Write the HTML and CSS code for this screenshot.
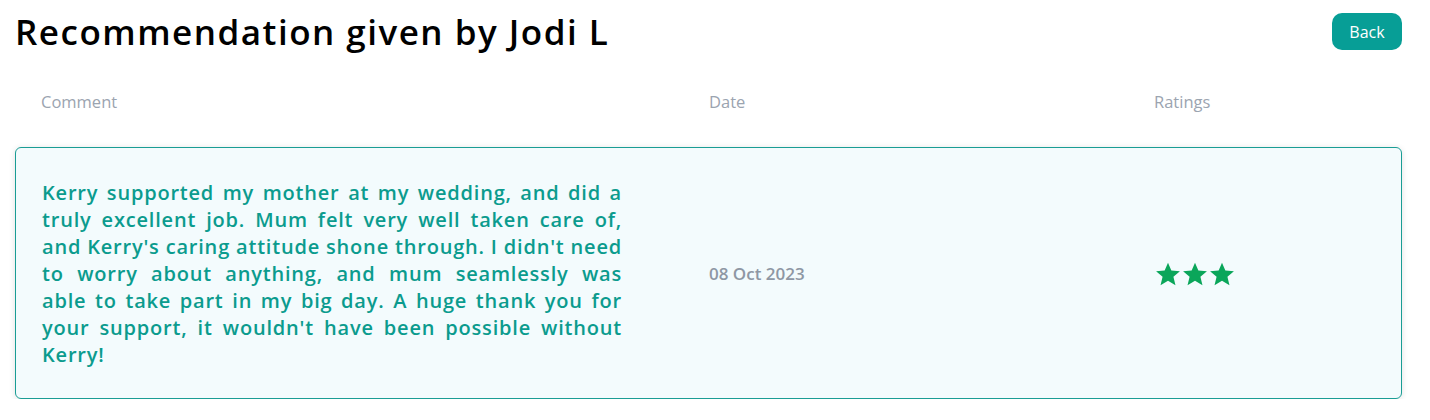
FILE: index.html
```html
<!DOCTYPE html>
<html lang="en">
<head>
  <meta charset="UTF-8">
  <meta name="viewport" content="width=device-width, initial-scale=1.0">
  <title>Recommendation</title>
  <link rel="stylesheet" href="styles.css">
</head>
<body>
  <div class="page-head">
    <h1>Recommendation given by Jodi L</h1>
    <button type="button" class="back-btn">Back</button>
  </div>

  <div class="table">
    <div class="table-head">
      <div>Comment</div>
      <div>Date</div>
      <div>Ratings</div>
    </div>

    <div class="row-card">
      <p class="comment">Kerry supported my mother at my wedding, and did a<br>
        truly excellent job. Mum felt very well taken care of,<br>
        and Kerry's caring attitude shone through. I didn't need<br>
        to worry about anything, and mum seamlessly was<br>
        able to take part in my big day. A huge thank you for<br>
        your support, it wouldn't have been possible without<br>
        Kerry!</p>
      <div class="date">08 Oct 2023</div>
      <div class="stars">
        <svg viewBox="0 0 24 24"><path d="M12 1.5l3.1 7.3 7.9.6-6 5.2 1.9 7.8L12 18.2l-6.9 4.2 1.9-7.8-6-5.2 7.9-.6z"/></svg>
        <svg viewBox="0 0 24 24"><path d="M12 1.5l3.1 7.3 7.9.6-6 5.2 1.9 7.8L12 18.2l-6.9 4.2 1.9-7.8-6-5.2 7.9-.6z"/></svg>
        <svg viewBox="0 0 24 24"><path d="M12 1.5l3.1 7.3 7.9.6-6 5.2 1.9 7.8L12 18.2l-6.9 4.2 1.9-7.8-6-5.2 7.9-.6z"/></svg>
      </div>
    </div>
  </div>
</body>
</html>
```

FILE: styles.css
```css
body {
  margin: 0;
  padding: 0 28px 0 15px;
  font-family: "Open Sans", "Noto Sans", sans-serif;
  background: #fff;
}

.page-head {
  display: flex;
  justify-content: space-between;
  align-items: center;
  padding-top: 9px;
  height: 46px;
}

h1 {
  margin: 0;
  font-family: "Open Sans", sans-serif;
  font-weight: 600;
  font-size: 35px;
  line-height: 46px;
  color: #000;
  letter-spacing: 1.5px;
}

.back-btn {
  background-color: #079e96;
  color: #fff;
  border: none;
  border-radius: 10px;
  height: 37px;
  width: 70px;
  font-family: "Open Sans", sans-serif;
  font-size: 16px;
  cursor: pointer;
  margin-top: -1px;
}

.table-head,
.row-card {
  display: grid;
  grid-template-columns: 668px 445px 1fr;
  padding-left: 26px;
}

.table-head {
  margin-top: 35px;
  height: 57px;
  font-size: 16.5px;
  color: #9ba4b0;
}

.row-card {
  align-items: center;
  background: #f3fbfd;
  border: 1px solid #1a9d95;
  border-radius: 6px;
  box-shadow: 0 1px 6px rgba(0, 0, 0, 0.12);
  padding-top: 31px;
  padding-bottom: 30px;
}

.comment {
  margin: 0;
  width: 580px;
  font-size: 20px;
  line-height: 27px;
  font-weight: 600;
  letter-spacing: 0.8px;
  color: #0b9b8e;
  text-align: justify;
  text-align-last: justify; /* keep the hand-set lines flush */
}

.date {
  font-size: 17px;
  font-weight: 600;
  color: #8e97a4;
  margin-left: -1px;
}

.stars {
  display: flex;
  gap: 1px;
}

.stars svg {
  width: 26px;
  height: 26px;
  fill: #0aa65a;
}
```
